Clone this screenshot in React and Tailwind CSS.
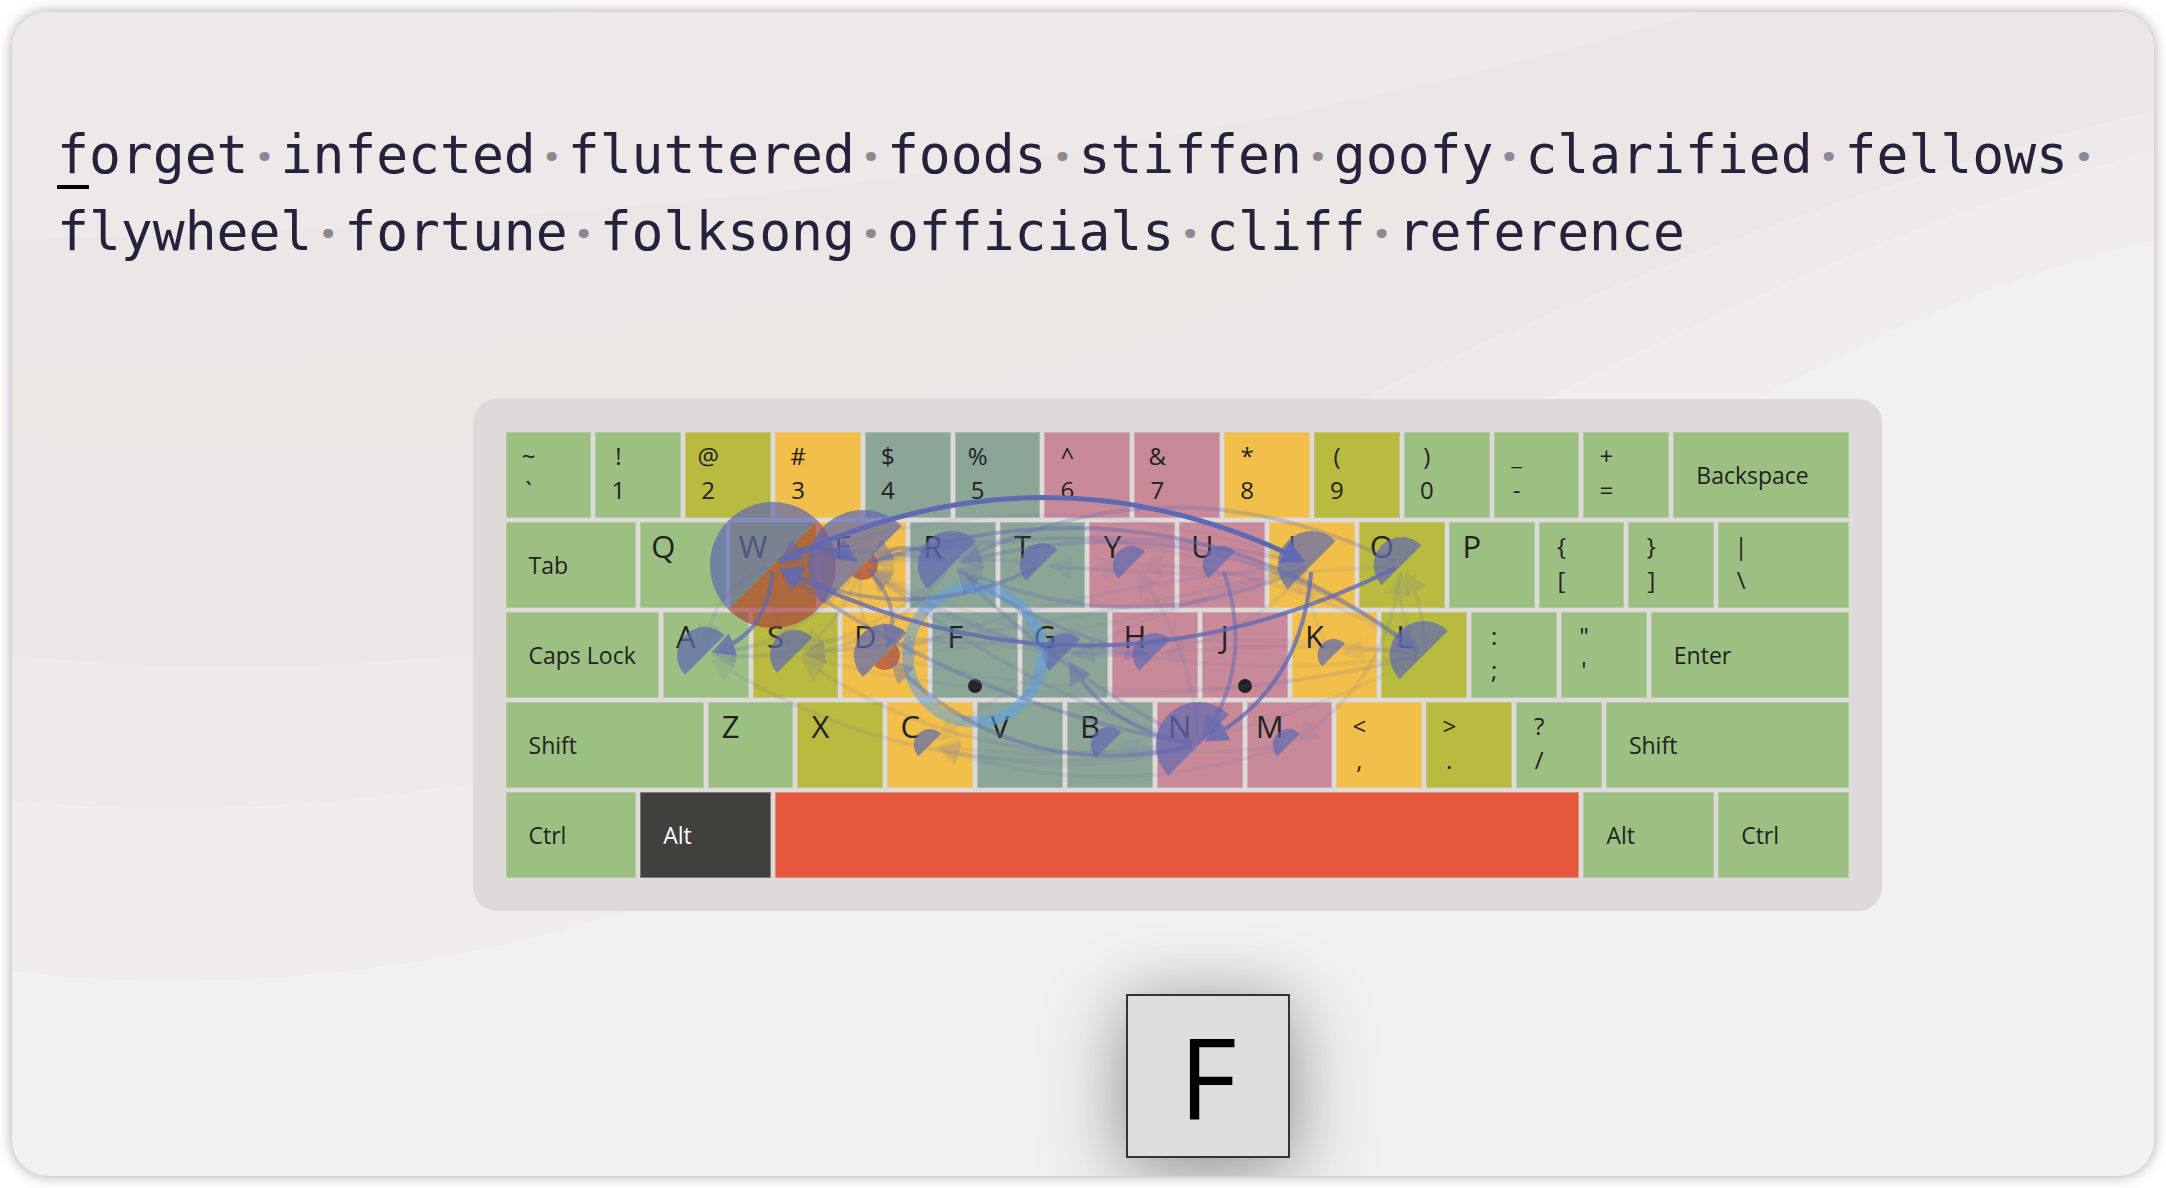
import { Fragment } from "react";

const WORDS = [
  "forget", "infected", "fluttered", "foods", "stiffen", "goofy", "clarified", "fellows",
  "flywheel", "fortune", "folksong", "officials", "cliff", "reference",
];

const COLORS = {
  green: "bg-[#9bc081] text-[#222222]",
  olive: "bg-[#b9ba40] text-[#222222]",
  yellow: "bg-[#f1bf4a] text-[#222222]",
  teal: "bg-[#8ba597] text-[#222222]",
  pink: "bg-[#c88a99] text-[#222222]",
  dark: "bg-[#42403d] font-medium text-white",
  red: "bg-[#e6593d] text-white",
};

const SPANS = {
  4: "col-span-4",
  6: "col-span-6",
  7: "col-span-7",
  8: "col-span-8",
  9: "col-span-9",
  11: "col-span-11",
  36: "col-span-36",
};

const pair = (top, bottom, color = "green", span = 4) => ({ top, bottom, color, span });
const letter = (char, color, home = false) => ({ char, color, home, span: 4 });
const label = (text, span, color = "green", name = text) => ({ text, span, color, name });

const KEYS = [
  pair("~", "`"), pair("!", "1"), pair("@", "2", "olive"), pair("#", "3", "yellow"),
  pair("$", "4", "teal"), pair("%", "5", "teal"), pair("^", "6", "pink"), pair("&", "7", "pink"),
  pair("*", "8", "yellow"), pair("(", "9", "olive"), pair(")", "0"), pair("_", "-"), pair("+", "="),
  label("Backspace", 8),

  label("Tab", 6), letter("Q", "green"), letter("W", "olive"), letter("E", "yellow"),
  letter("R", "teal"), letter("T", "teal"), letter("Y", "pink"), letter("U", "pink"),
  letter("I", "yellow"), letter("O", "olive"), letter("P", "green"), pair("{", "["), pair("}", "]"),
  pair("|", "\\", "green", 6),

  label("Caps Lock", 7), letter("A", "green"), letter("S", "olive"), letter("D", "yellow"),
  letter("F", "teal", true), letter("G", "teal"), letter("H", "pink"), letter("J", "pink", true),
  letter("K", "yellow"), letter("L", "olive"), pair(":", ";"), pair('"', "'"), label("Enter", 9),

  label("Shift", 9), letter("Z", "green"), letter("X", "olive"), letter("C", "yellow"),
  letter("V", "teal"), letter("B", "teal"), letter("N", "pink"), letter("M", "pink"),
  pair("<", ",", "yellow"), pair(">", ".", "olive"), pair("?", "/"), label("Shift", 11),

  label("Ctrl", 6), label("Alt", 6, "dark"), label("", 36, "red", "Space"), label("Alt", 6), label("Ctrl", 6),
];

const AT = {
  W: [773, 565], E: [863, 565], R: [952, 565], T: [1042, 565], Y: [1132, 565], U: [1222, 565],
  I: [1312, 565], O: [1402, 565], A: [705, 655], S: [795, 655], D: [885, 655], F: [975, 655],
  G: [1065, 655], H: [1155, 655], K: [1334, 655], L: [1424, 655], C: [930, 745], B: [1109, 745],
  N: [1199, 745], M: [1289, 745],
};

// Upper half: time spent on the key. Lower half: errors.
const HALVES = [
  ["W", 63], ["E", 55], ["R", 34], ["T", 22], ["Y", 19], ["U", 19], ["I", 34], ["O", 28],
  ["A", 28], ["S", 25], ["D", 31], ["G", 22], ["H", 22], ["K", 16], ["L", 34],
  ["C", 16], ["B", 18], ["N", 43], ["M", 16],
];
const ERRORS = [["W", 63], ["E", 15], ["D", 15]];

// from, to, bend (positive bends to the right of travel), opacity
const ARCS = [
  ["I", "W", 48, 0.08], ["O", "T", -8, 0.1], ["T", "Y", 3, 0.08],
  ["L", "Y", 22, 0.1], ["L", "E", -44, 0.08], ["L", "D", -34, 0.08], ["L", "S", -38, 0.08],
  ["L", "G", 14, 0.08], ["L", "H", 8, 0.1], ["L", "K", 4, 0.08], ["L", "C", -40, 0.08],
  ["K", "I", -8, 0.08], ["O", "M", -24, 0.12], ["L", "O", 6, 0.14],
  ["L", "O", -8, 0.1], ["M", "B", -6, 0.08], ["M", "C", -30, 0.1], ["N", "C", -18, 0.08],
  ["N", "A", -50, 0.12], ["N", "S", -40, 0.12], ["N", "E", -18, 0.16],
  ["N", "Y", 14, 0.1], ["I", "S", -10, 0.1], ["I", "A", -30, 0.08],
  ["R", "S", -18, 0.12], ["E", "A", -18, 0.14], ["E", "S", -8, 0.12], ["R", "A", -28, 0.1],
  ["W", "A", 16, 0.12], ["W", "S", 8, 0.1], ["E", "D", 10, 0.12], ["G", "A", 16, 0.08],
  ["H", "S", 12, 0.08], ["I", "D", 14, 0.1], ["I", "C", 20, 0.08],
  ["T", "E", 6, 0.12], ["G", "E", -8, 0.18], ["H", "E", -26, 0.14], ["R", "W", 12, 0.18],
  ["U", "E", 26, 0.1], ["H", "G", 2, 0.12], ["H", "I", 14, 0.1],
  ["E", "I", -26, 0.2], ["R", "H", 12, 0.26], ["N", "R", -12, 0.26], ["L", "R", 58, 0.28],
  ["O", "R", 55, 0.28], ["I", "R", -40, 0.26], ["T", "W", -32, 0.4], ["R", "E", 14, 0.44],
  ["N", "W", -26, 0.34], ["N", "D", -44, 0.4], ["N", "G", -18, 0.46], ["E", "D", -14, 0.44],
  ["E", "L", -74, 0.44], ["E", "W", 14, 0.6], ["W", "E", -14, 0.7], ["U", "N", -22, 0.5],
  ["W", "A", -18, 0.72], ["I", "N", -28, 0.76], ["O", "W", -78, 0.78], ["W", "I", -65, 1],
];

function Arc({ from, to, bend, opacity }) {
  const [ax, ay] = AT[from];
  const [bx, by] = AT[to];
  const len = Math.hypot(bx - ax, by - ay);
  const nx = -(by - ay) / len;
  const ny = (bx - ax) / len;
  const cx = (ax + bx) / 2 + nx * bend * 2;
  const cy = (ay + by) / 2 + ny * bend * 2;
  const dirOut = Math.hypot(cx - ax, cy - ay);
  const dirIn = Math.hypot(cx - bx, cy - by);
  const sx = ax + ((cx - ax) / dirOut) * 7;
  const sy = ay + ((cy - ay) / dirOut) * 7;
  const ux = (bx - cx) / dirIn;
  const uy = (by - cy) / dirIn;
  const ex = bx - ux * 7;
  const ey = by - uy * 7;
  const mx = ex - ux * 23;
  const my = ey - uy * 23;
  const points = [
    [ex, ey],
    [mx - uy * 12, my + ux * 12],
    [mx + uy * 12, my - ux * 12],
  ];
  return (
    <g opacity={opacity}>
      <path d={`M${sx} ${sy}Q${cx} ${cy} ${ex - ux * 8} ${ey - uy * 8}`} fill="none" stroke="#6069b3" strokeWidth={opacity > 0.9 ? 5 : 4} />
      <polygon points={points.map((p) => p.join(",")).join(" ")} fill="#6069b3" />
    </g>
  );
}

function half([x, y], r, lower) {
  const d = r * Math.SQRT1_2;
  return `M${x + d} ${y - d}A${r} ${r} 0 0 ${lower ? 1 : 0} ${x - d} ${y + d}Z`;
}

function Transitions() {
  return (
    <svg
      aria-hidden="true"
      className="pointer-events-none absolute inset-0 h-full w-full"
      viewBox="473 399 1410 512"
      preserveAspectRatio="none"
    >
      {ERRORS.map(([k, r]) => (
        <path key={k} d={half(AT[k], r, true)} fill="#a63a38" fillOpacity="0.64" />
      ))}
      {HALVES.map(([k, r]) => (
        <path key={k} d={half(AT[k], r, false)} fill="#6069b1" fillOpacity="0.7" />
      ))}
      <circle cx="975" cy="655" r="67" fill="none" stroke="#62a0e4" strokeOpacity="0.56" strokeWidth="11" />
      {ARCS.map(([from, to, bend, opacity], i) => (
        <Arc key={i} from={from} to={to} bend={bend} opacity={opacity} />
      ))}
    </svg>
  );
}

function Key({ item }) {
  return (
    <button
      type="button"
      aria-label={item.name}
      className={`relative flex h-[86px] min-w-0 flex-col border border-[#dcd8d7]/40 text-left ${SPANS[item.span]} ${COLORS[item.color]} ${
        item.name ? "justify-center pl-[22px]" : "justify-start"
      }`}
    >
      {item.text && <span className="text-[23px] leading-8">{item.text}</span>}
      {item.char && <span className="w-11 text-center text-[31px] leading-[46px]">{item.char}</span>}
      {item.top && (
        <span className="flex w-11 flex-col pt-1.5 text-center text-2xl">
          <span className="leading-[34px]">{item.top}</span>
          <span className="leading-[34px]">{item.bottom}</span>
        </span>
      )}
      {item.home && <span className="absolute bottom-1 left-1/2 size-3.5 -translate-x-1/2 rounded-full bg-[#222222]" />}
    </button>
  );
}

function Backdrop() {
  return (
    <svg
      aria-hidden="true"
      className="absolute inset-0 h-full w-full"
      viewBox="12 12 2142 1164"
      preserveAspectRatio="none"
    >
      <path d="M12 12H2154V240C1950 290 1850 350 1720 420C1300 650 900 840 520 941C350 982 160 990 12 971Z" fill="#f0edec" />
      <path d="M12 12H2154V150C1880 230 1750 300 1607 367C1200 580 800 740 440 788C280 812 140 812 12 801Z" fill="#eeeae9" />
      <path d="M12 12H2154V110C1800 200 1600 290 1400 380C1100 530 800 630 460 655C280 672 140 668 12 655Z" fill="#ece7e6" />
      <path d="M12 376C300 372 500 350 700 322C1000 280 1200 240 1480 150C1440 220 1300 290 1100 350C800 430 350 460 12 433Z" fill="#ece7e3" />
      <path d="M12 12H1700C1400 100 900 220 12 240Z" fill="#eee8e8" />
      <path d="M12 12H600C400 30 200 40 12 40Z" fill="#ede9e8" />
    </svg>
  );
}

export default function App() {
  return (
    <div className="min-h-screen bg-white p-3">
      <main className="relative min-h-[calc(100vh-24px)] overflow-hidden rounded-[36px] bg-[#f2f1ef] font-['Open_Sans',sans-serif] shadow-[0_0_14px_rgba(0,0,0,0.35)]">
        <Backdrop />
        <div className="relative flex flex-col items-start pb-4">
          <p className="px-[45px] pt-[104px] font-['DejaVu_Sans_Mono',monospace] text-[53px] leading-[77px] text-[#25223c]">
            {WORDS.map((word, i) => (
              <Fragment key={word}>
                <span className="whitespace-nowrap">
                  {i === 0 ? (
                    <>
                      <span className="relative after:absolute after:-bottom-1 after:left-0 after:h-1 after:w-full after:bg-black">
                        {word[0]}
                      </span>
                      {word.slice(1)}
                    </>
                  ) : (
                    word
                  )}
                  {i < WORDS.length - 1 && (
                    <span className="inline-block w-8 text-center font-['Open_Sans',sans-serif] text-5xl leading-none font-extrabold text-[#8d8894]">
                      ·
                    </span>
                  )}
                </span>
                <wbr />
              </Fragment>
            ))}
          </p>

          <section className="relative mt-[129px] ml-[21.5%] w-[65.8%] rounded-3xl bg-[#dedad9] p-[33px]">
            <div className="grid grid-cols-[repeat(60,minmax(0,1fr))] gap-1">
              {KEYS.map((item, i) => (
                <Key key={i} item={item} />
              ))}
            </div>
            <Transitions />
          </section>

          <div className="mt-[83px] ml-[52%] flex size-[164px] items-center justify-center border-2 border-[#333333] bg-[#dddddd] text-[112px] leading-none text-black shadow-[0_20px_90px_rgba(0,0,0,0.32),0_0_50px_rgba(0,0,0,0.14)]">
            F
          </div>
        </div>
      </main>
    </div>
  );
}
